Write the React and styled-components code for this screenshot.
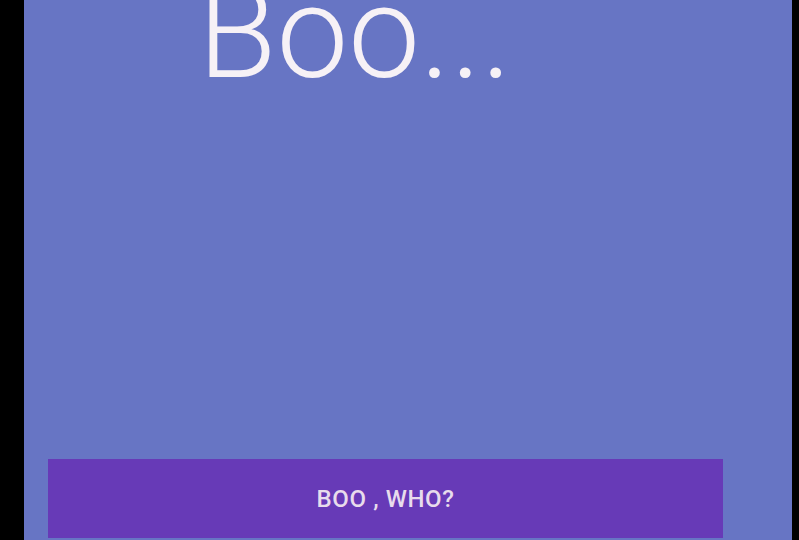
import styled, { createGlobalStyle } from "styled-components";

const GlobalStyle = createGlobalStyle`
  html, body {
    margin: 0;
    padding: 0;
    background: #000;
  }
  body {
    font-family: Roboto, "Noto Sans", sans-serif;
  }
`;

const Screen = styled.div`
  display: flex;
  width: 799px;
  height: 540px;
  overflow: hidden;
  background: #000;
`;

const Panel = styled.main`
  margin-left: 24px;
  width: 768px;
  height: 540px;
  display: flex;
  flex-direction: column;
  justify-content: space-between;
  background: #6775c4;
  overflow: hidden;
`;

const Title = styled.h1`
  margin: -31px 0 0 174px;
  font-size: 128px;
  line-height: 1;
  font-weight: 300;
  color: #f6f1f6;
`;

const ActionButton = styled.button`
  margin: 0 0 2px 24px;
  width: 675px;
  height: 79px;
  border: none;
  background: #673ab7;
  color: #e8dcec;
  font-family: Roboto, sans-serif;
  font-size: 24px;
  font-weight: 500;
  letter-spacing: 0.6px;
  text-transform: uppercase;
  cursor: pointer;
`;

const App = () => {
  return (
    <Screen>
      <GlobalStyle />
      <Panel>
        <Title>Boo...</Title>
        <ActionButton>Boo , who?</ActionButton>
      </Panel>
    </Screen>
  );
};

export default App;
